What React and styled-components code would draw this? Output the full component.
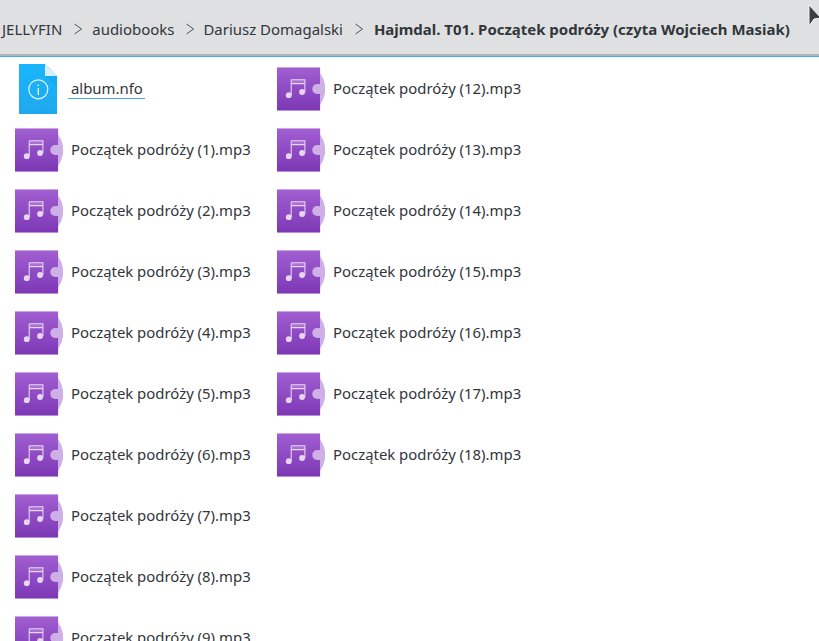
import React from 'react';
import styled, { createGlobalStyle } from 'styled-components';

const GlobalStyle = createGlobalStyle`
  html, body {
    margin: 0;
    padding: 0;
    background: #ffffff;
    overflow: hidden;
  }
  body {
    font-family: "Noto Sans", sans-serif;
    color: #31363b;
  }
`;

const Page = styled.div`
  position: relative;
  width: 819px;
  height: 641px;
  overflow: hidden;
  background: #ffffff;
`;

const Breadcrumbs = styled.div`
  display: flex;
  align-items: center;
  box-sizing: border-box;
  height: 57px;
  padding: 1px 0 0 2px;
  background: #dfe0e2;
  box-shadow: inset 0 -3px 0 #b4b5b7;
  font-size: 14.96px;
  white-space: nowrap;
`;

const Crumb = styled.span`
  font-weight: ${(p) => (p.$current ? 700 : 400)};
`;

const Chevron = styled.svg`
  flex: none;
  width: 10px;
  height: 14px;
  margin: 0 ${(p) => p.$right}px 0 11px;
`;

const AccentLine = styled.div`
  height: 1px;
  margin: -1px 0 1px;
  background: #3daee9;
  position: relative;
`;

const Files = styled.div`
  display: grid;
  grid-template-rows: repeat(10, 61px);
  grid-auto-flow: column;
  grid-auto-columns: 262px;
  padding-left: 15px;
`;

const File = styled.div`
  display: flex;
  align-items: center;
  height: 61px;
`;

const IconSlot = styled.div`
  flex: none;
  width: 48px;
  height: 50px;
  display: flex;
  align-items: center;
  margin-right: 8px;
`;

const Name = styled.span`
  font-size: 14.9px;
  line-height: 20px;
  margin-bottom: 2px;
  white-space: nowrap;
  ${(p) => p.$focused && `
    padding: 0 2px 0 3px;
    margin-left: -3px;
    box-shadow: 0 1px 0 #3daee9;
  `}
`;

const Cursor = styled.svg`
  position: absolute;
  top: 4px;
  left: 808px;
  width: 14px;
  height: 24px;
`;

const AudioIcon = ({ id }) => (
  <svg width="49" height="44" viewBox="0 0 49 44">
    <defs>
      <linearGradient id={id} x1="0" y1="0" x2="0" y2="1">
        <stop offset="0" stopColor="#a15fd1" />
        <stop offset="1" stopColor="#7d37b5" />
      </linearGradient>
    </defs>
    <path d="M44 6 A27 27 0 0 1 44 38 Z" fill="#cfb0e6" />
    <rect x="0" y="0" width="44" height="44" fill={`url(#${id})`} />
    <circle cx="41" cy="22" r="5" fill="#cfb0e6" />
    <rect x="41" y="17" width="3" height="10" fill="#cfb0e6" />
    <rect x="14.5" y="12.5" width="14" height="4" fill="#e6d6f2" opacity="0.25" />
    <path d="M14.5 12.5 H28.5 V25 M14.5 12.5 V28 M14.5 16.5 H28.5" fill="none" stroke="#e6d6f2" strokeWidth="1.1" />
    <circle cx="12" cy="28.3" r="3" fill="#e6d6f2" />
    <circle cx="25.6" cy="25" r="3" fill="#e6d6f2" />
  </svg>
);

const InfoIcon = () => (
  <svg width="48" height="50" viewBox="0 0 48 50">
    <defs>
      <linearGradient id="nfo" x1="0" y1="0" x2="0" y2="1">
        <stop offset="0" stopColor="#19b6fb" />
        <stop offset="1" stopColor="#1fa8ee" />
      </linearGradient>
    </defs>
    <path d="M4 0 H30 L42 12 V50 H4 Z" fill="url(#nfo)" />
    <path d="M30 12 H42 V24 Z" fill="#129ddf" opacity="0.35" />
    <path d="M30 0 L42 12 H30 Z" fill="#d8effb" />
    <circle cx="23.3" cy="25.3" r="9.5" fill="none" stroke="#e2f5fe" strokeWidth="1.2" />
    <rect x="22.6" y="24" width="1.4" height="7" fill="#e2f5fe" />
    <rect x="22.6" y="20.4" width="1.4" height="1.6" fill="#e2f5fe" />
  </svg>
);

const tracks = [1, 2, 3, 4, 5, 6, 7, 8, 9, 12, 13, 14, 15, 16, 17, 18].map((n) => `Początek podróży (${n}).mp3`);
const chevron = <path d="M1.5 2 L8.5 7 L1.5 12" fill="none" stroke="#4d5257" strokeWidth="1" />;

export default function App() {
  return (
    <Page>
      <GlobalStyle />
      <Breadcrumbs>
        <Crumb>JELLYFIN</Crumb>
        <Chevron viewBox="0 0 10 14" $right={9}>{chevron}</Chevron>
        <Crumb>audiobooks</Crumb>
        <Chevron viewBox="0 0 10 14" $right={8}>{chevron}</Chevron>
        <Crumb>Dariusz Domagalski</Crumb>
        <Chevron viewBox="0 0 10 14" $right={10}>{chevron}</Chevron>
        <Crumb $current>Hajmdal. T01. Początek podróży (czyta Wojciech Masiak)</Crumb>
      </Breadcrumbs>
      <AccentLine />
      <Files>
        <File>
          <IconSlot><InfoIcon /></IconSlot>
          <Name $focused>album.nfo</Name>
        </File>
        {tracks.map((t, i) => (
          <File key={t}>
            <IconSlot><AudioIcon id={`audio-${i}`} /></IconSlot>
            <Name>{t}</Name>
          </File>
        ))}
      </Files>
      <Cursor viewBox="0 0 14 24">
        <path d="M1 1 L13 14 L6 15 L1 22 Z" fill="#3a3f44" stroke="#f4f4f4" strokeWidth="1" />
      </Cursor>
    </Page>
  );
}
